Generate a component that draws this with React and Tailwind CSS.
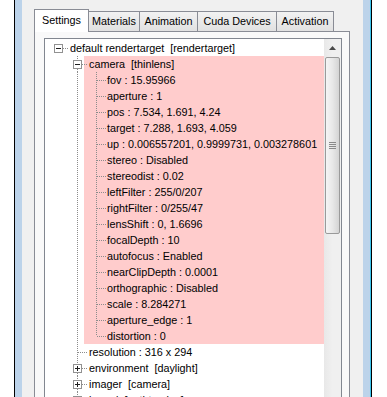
import React from 'react';

// tree columns, relative to the left edge of the tree content
const COL = [13, 32, 51];
const TEXT_X = [25, 44, 62];
const PINK_X = 39;
const LINE = '#8c8c8c';

const rows = [
  { lv: 0, box: 'minus', text: 'default rendertarget  [rendertarget]', root: true },
  { lv: 1, box: 'minus', text: 'camera  [thinlens]', pink: true },
  { lv: 2, text: 'fov : 15.95966', pink: true },
  { lv: 2, text: 'aperture : 1', pink: true },
  { lv: 2, text: 'pos : 7.534, 1.691, 4.24', pink: true },
  { lv: 2, text: 'target : 7.288, 1.693, 4.059', pink: true },
  { lv: 2, text: 'up : 0.006557201, 0.9999731, 0.003278601', pink: true },
  { lv: 2, text: 'stereo : Disabled', pink: true },
  { lv: 2, text: 'stereodist : 0.02', pink: true },
  { lv: 2, text: 'leftFilter : 255/0/207', pink: true },
  { lv: 2, text: 'rightFilter : 0/255/47', pink: true },
  { lv: 2, text: 'lensShift : 0, 1.6696', pink: true },
  { lv: 2, text: 'focalDepth : 10', pink: true },
  { lv: 2, text: 'autofocus : Enabled', pink: true },
  { lv: 2, text: 'nearClipDepth : 0.0001', pink: true },
  { lv: 2, text: 'orthographic : Disabled', pink: true },
  { lv: 2, text: 'scale : 8.284271', pink: true },
  { lv: 2, text: 'aperture_edge : 1', pink: true },
  { lv: 2, text: 'distortion : 0', pink: true, last: true },
  { lv: 1, text: 'resolution : 316 x 294' },
  { lv: 1, box: 'plus', text: 'environment  [daylight]' },
  { lv: 1, box: 'plus', text: 'imager  [camera]' },
  { lv: 1, box: 'plus', text: 'kernel  [pathtracing]' },
];

const vline = (x, y1, y2, k) => (
  <line key={k} x1={x + 0.5} y1={y1} x2={x + 0.5} y2={y2} stroke={LINE} strokeDasharray="1 1" />
);
const hline = (x1, x2, y, k) => (
  <line key={k} x1={x1} y1={y + 0.5} x2={x2} y2={y + 0.5} stroke={LINE} strokeDasharray="1 1" />
);

function guideLines(r) {
  const els = [];
  const c = COL[r.lv];
  if (r.lv === 2) els.push(vline(COL[1], 0, 16, 'anc'));
  if (!r.root) {
    els.push(vline(c, 0, r.box ? 4 : 8, 'top'));
    if (!r.last) els.push(vline(c, r.box ? 13 : 8, 16, 'bot'));
  }
  els.push(hline(r.box ? c + 5 : c + 1, TEXT_X[r.lv] - 1, 8, 'h'));
  if (r.box) {
    els.push(
      <rect key="box" x={c - 3.5} y={4.5} width={8} height={8} fill="white" stroke="#919191" />
    );
    els.push(<line key="minus" x1={c - 2} y1={8.5} x2={c + 3} y2={8.5} stroke="#1e1e1e" />);
    if (r.box === 'plus')
      els.push(<line key="plus" x1={c + 0.5} y1={6} x2={c + 0.5} y2={11} stroke="#1e1e1e" />);
  }
  return els;
}

function TreeRow({ r }) {
  const tx = TEXT_X[r.lv];
  const aw = Math.min(tx, PINK_X);
  const bw = tx - PINK_X;
  return (
    <div className="flex h-4">
      <svg width={aw} height={16} viewBox={`0 0 ${aw} 16`} className="shrink-0">
        {guideLines(r)}
      </svg>
      <div className={`flex flex-1 items-center ${r.pink ? 'bg-[#ffcccc]' : ''}`}>
        {bw > 0 && (
          <svg width={bw} height={16} viewBox={`${PINK_X} 0 ${bw} 16`} className="shrink-0">
            {guideLines(r)}
          </svg>
        )}
        <span className="whitespace-pre leading-4">{r.text}</span>
      </div>
    </div>
  );
}

function ScrollBar() {
  return (
    <div className="flex w-[17px] shrink-0 flex-col bg-linear-to-r from-[#e8e8e8] via-[#f0f0f0] to-[#f0f0f0]">
      <div className="flex h-[17px] items-center justify-center">
        <svg width="7" height="4" viewBox="0 0 7 4">
          <path d="M3.5 0 L7 4 L0 4 Z" fill="#4a4a4a" />
        </svg>
      </div>
      <div className="mx-px mt-px flex h-[177px] flex-col items-center justify-center gap-px rounded-[2px] border border-[#9a9a9a] bg-linear-to-r from-[#f5f5f5] via-[#e8e8e8] to-[#d4d4d4]">
        <div className="h-px w-[7px] bg-[#8a8a8a]" />
        <div className="h-px w-[7px] bg-[#8a8a8a]" />
        <div className="h-px w-[7px] bg-[#8a8a8a]" />
        <div className="h-px w-[7px] bg-[#8a8a8a]" />
      </div>
      <div className="flex-1" />
      <div className="flex h-[17px] items-center justify-center">
        <svg width="7" height="4" viewBox="0 0 7 4">
          <path d="M0 0 L7 0 L3.5 4 Z" fill="#4a4a4a" />
        </svg>
      </div>
    </div>
  );
}

const tabs = [
  { label: 'Settings', w: 'w-[55px]', active: true },
  { label: 'Materials', w: 'w-[52px]' },
  { label: 'Animation', w: 'w-[59px]' },
  { label: 'Cuda Devices', w: 'w-[80px]' },
  { label: 'Activation', w: 'w-[58px]' },
];

export default function App() {
  return (
    <div className="flex h-[397px] w-[387px] overflow-hidden bg-white font-['Liberation_Sans',Arial,sans-serif] text-[10.8px] text-black">
      <div className="w-[14px] shrink-0 bg-white" />
      <div className="w-px shrink-0 bg-black" />
      <div className="w-[7px] shrink-0 bg-[#bcd3ea]" />

      <div className="w-[341px] shrink-0 bg-[#f0f0f0] pl-[12px] pt-[9px]">
        <div className="w-[316px]">
          <div className="relative z-10 flex h-[22px] items-end">
            {tabs.map((t, i) => (
              <div
                key={t.label}
                className={`flex shrink-0 items-center justify-center border border-[#898c95] border-b-0 ${t.w} ${i > 0 ? '-ml-px' : ''} ${
                  t.active
                    ? 'z-10 -mb-px h-[23px] bg-white pb-[2px]'
                    : 'h-[20px] bg-linear-to-b from-[#f2f2f2] to-[#e1e1e1]'
                }`}
              >
                {t.label}
              </div>
            ))}
          </div>

          <div className="border border-[#898c95] bg-[#f9f9f9] pl-[9px] pt-[6px]">
            <div className="flex h-[370px] w-[298px] border border-[#828790] bg-white">
              <div className="flex-1 overflow-hidden pt-px">
                {rows.map((r, i) => (
                  <TreeRow key={i} r={r} />
                ))}
              </div>
              <ScrollBar />
            </div>
          </div>
        </div>
      </div>

      <div className="w-[7px] shrink-0 bg-[#bcd3ea]" />
      <div className="w-px shrink-0 bg-[#3cc4ec]" />
      <div className="w-px shrink-0 bg-black" />
      <div className="flex-1 bg-white" />
    </div>
  );
}
